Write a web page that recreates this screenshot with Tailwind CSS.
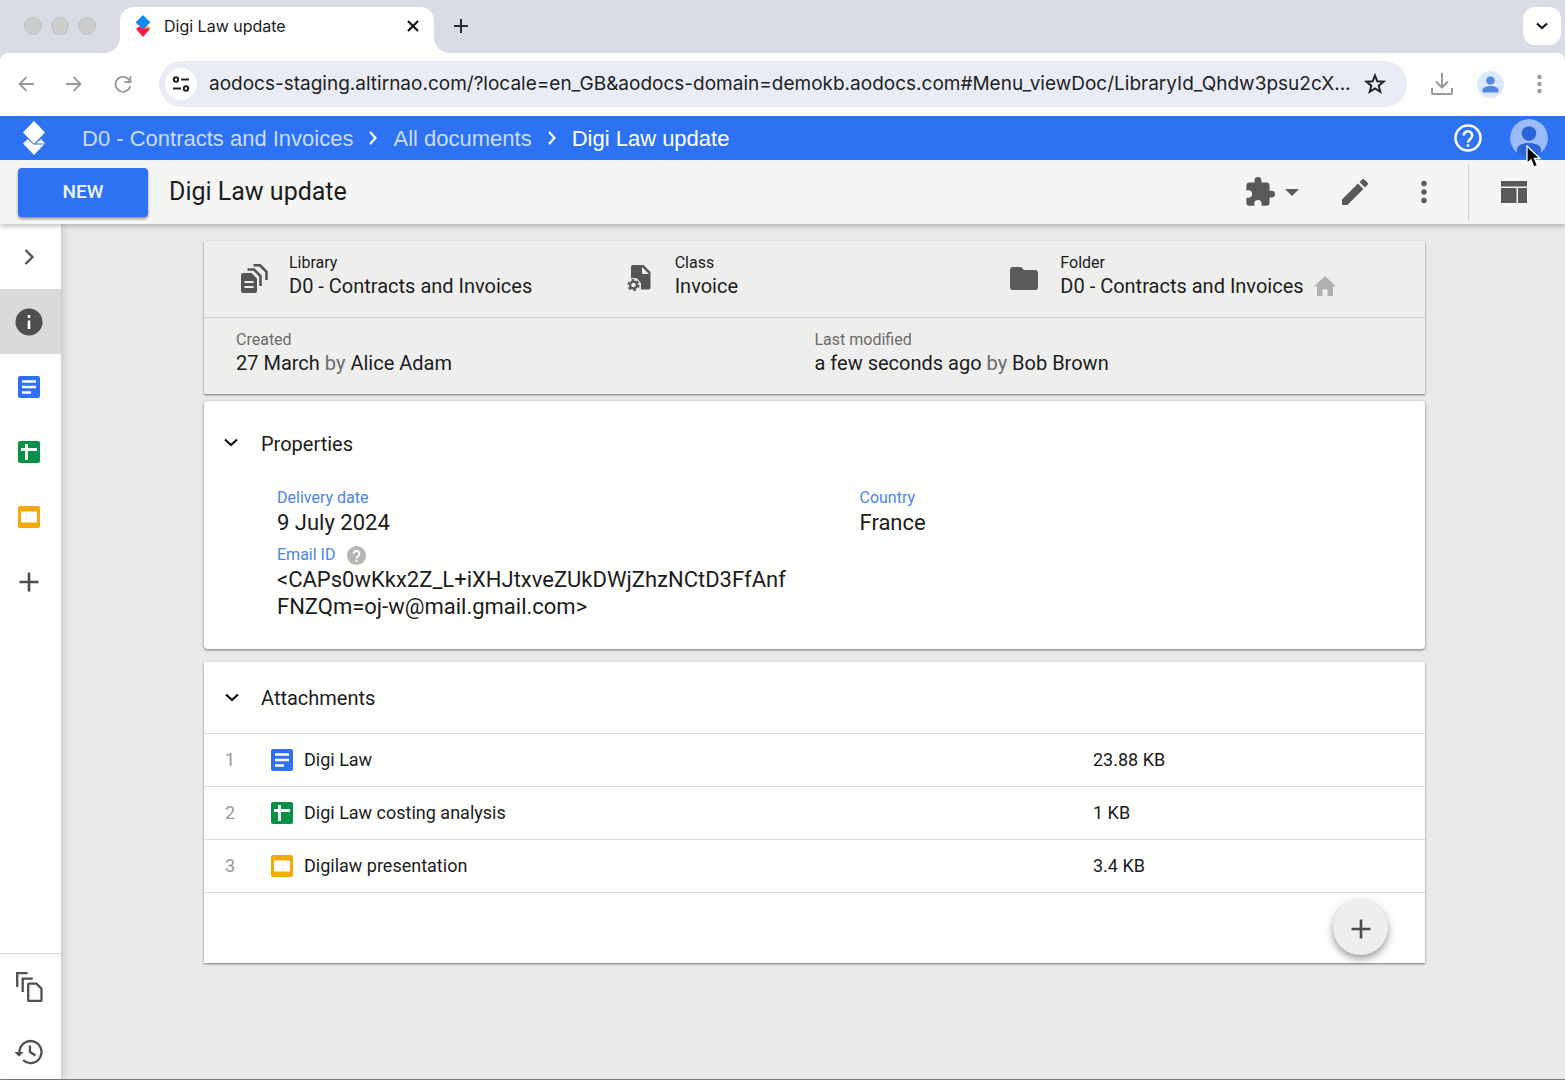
<!DOCTYPE html>
<html lang="en">
<head>
<meta charset="utf-8">
<meta name="viewport" content="width=device-width, initial-scale=1">
<title>Digi Law update</title>
<script src="https://cdn.jsdelivr.net/npm/@tailwindcss/browser@4"></script>
</head>
<body class="flex min-h-screen flex-col bg-[#d9dce4] font-['Roboto',sans-serif] text-[#1c1c1c]">
<svg class="hidden">
  <defs>
    <symbol id="doc" viewBox="0 0 22 22"><rect width="22" height="22" rx="2" fill="#2f6ff0"/><path d="M4 5.500h14M4 11h14M4 16.500h9" stroke="#fff" stroke-width="2.400"/></symbol>
    <symbol id="sheet" viewBox="0 0 22 22"><rect width="22" height="22" rx="2" fill="#089048"/><path d="M3 8.500h16M8.500 3v16" stroke="#fff" stroke-width="2.800"/></symbol>
    <symbol id="slide" viewBox="0 0 22 22"><rect width="22" height="22" rx="2" fill="#f2aa0a"/><rect x="3" y="5.500" width="16" height="11" fill="#fff"/></symbol>
    <symbol id="plus" viewBox="0 0 20 20"><path d="M10 .5v19M.5 10h19" stroke="#4c4c4c" stroke-width="2.600"/></symbol>
    <symbol id="down" viewBox="0 0 14 9"><path d="m1 1.500 6 5.500 6-5.500" fill="none" stroke="#111" stroke-width="2.200"/></symbol>
    <symbol id="dots" viewBox="0 0 6 24"><circle cx="3" cy="3.500" r="2.700"/><circle cx="3" cy="12" r="2.700"/><circle cx="3" cy="20.500" r="2.700"/></symbol>
  </defs>
</svg>

<!-- Browser tab strip -->
<div class="flex h-[53px] items-start pt-[7px]">
  <div class="flex gap-[9px] pt-[10px] pl-6">
    <span class="size-[18px] rounded-full border border-[#bfc1c1] bg-[#cbcecb]"></span>
    <span class="size-[18px] rounded-full border border-[#bfc1c1] bg-[#cbcecb]"></span>
    <span class="size-[18px] rounded-full border border-[#bfc1c1] bg-[#cbcecb]"></span>
  </div>
  <div class="relative ml-6 flex h-[46px] w-[314px] items-start rounded-t-[14px] bg-[#fefefd] px-[15px] pt-[7px]">
    <svg class="absolute bottom-0 -left-4 size-4" viewBox="0 0 16 16"><path d="M16 0v16H0C9 16 16 9 16 0z" fill="#fefefd"/></svg>
    <svg class="absolute -right-4 bottom-0 size-4" viewBox="0 0 16 16"><path d="M0 0v16h16C7 16 0 9 0 0z" fill="#fefefd"/></svg>
    <svg class="mt-px h-[22px] w-4" viewBox="0 0 16 22"><path d="M1 14 8 22l7-8-3-2.500H4z" fill="#fb1d43"/><path d="m9 13.500 4-3 2.500 2.500z" fill="#f8c040"/><path d="m8 0 7.500 7.500L8 14 .5 7.500z" fill="#0b8cf8"/></svg>
    <span class="ml-[13px] flex-1 font-['Inter',sans-serif] text-base leading-6">Digi Law update</span>
    <button aria-label="Close tab" class="mt-[6px]"><svg class="size-3" viewBox="0 0 12 12"><path d="m1 1 10 10M11 1 1 11" stroke="#111" stroke-width="2.200"/></svg></button>
  </div>
  <button aria-label="New tab" class="mt-3 ml-5"><svg class="size-[14px]" viewBox="0 0 14 14"><path d="M7 0v14M0 7h14" stroke="#2c2c2c" stroke-width="2"/></svg></button>
  <button aria-label="Search tabs" class="mr-1 ml-auto flex size-[38px] items-center justify-center rounded-xl bg-[#fefefd]"><svg class="h-2 w-3" viewBox="0 0 12 8"><path d="m1 1.500 5 4.500 5-4.500" fill="none" stroke="#111" stroke-width="2.200"/></svg></button>
</div>

<!-- Address bar -->
<div class="flex h-[63px] items-center rounded-t-lg bg-[#fefefd] pr-[23px] pb-px pl-[18px] text-[#9a9a9a]">
  <button aria-label="Back"><svg class="size-4" viewBox="0 0 16 16" fill="none" stroke="currentColor" stroke-width="1.800"><path d="M16 8H1.500M8.500 1l-7 7 7 7"/></svg></button>
  <button aria-label="Forward" class="ml-8"><svg class="size-4" viewBox="0 0 16 16" fill="none" stroke="currentColor" stroke-width="1.800"><path d="M0 8h14.500M7.500 1l7 7-7 7"/></svg></button>
  <button aria-label="Reload" class="ml-8"><svg class="size-[18px]" viewBox="0 0 18 18" fill="none" stroke="currentColor" stroke-width="1.800"><path d="M15.500 5.500A7.500 7.500 0 1 0 16.300 11M16.500 1v6h-6"/></svg></button>
  <div class="ml-[27px] flex h-[46px] min-w-0 flex-1 items-center rounded-full bg-[#e9ecf5] pr-[21px] pl-[6px]">
    <button aria-label="Site information" class="flex size-8 shrink-0 items-center justify-center rounded-full bg-white"><svg class="h-4 w-[18px]" viewBox="0 0 18 16" fill="none" stroke="#222" stroke-width="2"><circle cx="4" cy="3.500" r="2.200"/><path d="M9 3.500h8M1 12.500h8"/><circle cx="14" cy="12.500" r="2.200"/></svg></button>
    <input aria-label="Address" class="ml-3 min-w-0 flex-1 bg-transparent pt-px font-['Inter',sans-serif] text-[19px] text-[#222] outline-none" value="aodocs-staging.altirnao.com/?locale=en_GB&amp;aodocs-domain=demokb.aodocs.com#Menu_viewDoc/LibraryId_Qhdw3psu2cX...">
    <button aria-label="Bookmark" class="ml-2"><svg class="size-[22px]" viewBox="0 0 22 22" fill="none" stroke="#222" stroke-width="2"><path d="m11 2.500 2.300 5.800 6.200.4-4.800 4 1.600 6.100-5.300-3.400-5.300 3.400 1.600-6.100-4.800-4 6.200-.4z"/></svg></button>
  </div>
  <button aria-label="Downloads" class="ml-6"><svg class="size-[22px]" viewBox="0 0 22 22" fill="none" stroke="currentColor" stroke-width="2"><path d="M11 0v14M5 8.500l6 6 6-6M1 15v4.500q0 1.500 1.500 1.500h17q1.500 0 1.500-1.500V15"/></svg></button>
  <button aria-label="Profile" class="ml-6"><svg class="size-[27px]" viewBox="0 0 27 27"><circle cx="13.500" cy="13.500" r="13.500" fill="#dce8fb"/><circle cx="13.500" cy="9.500" r="4.300" fill="#5588e2"/><path d="M5.500 21.500V19c0-3 5-4 8-4s8 1 8 4v2.500z" fill="#5588e2"/></svg></button>
  <button aria-label="Browser menu" class="ml-[33px]"><svg class="h-5 w-[5px]" viewBox="0 0 6 24" fill="currentColor"><use href="#dots"/></svg></button>
</div>

<!-- Application header -->
<header class="z-20 flex h-[44px] items-center bg-[#2d72f3] pr-[17px] pl-[22px] font-['Liberation_Sans',sans-serif] text-[22px] text-[#c9dcfc]">
  <svg class="h-[34px] w-6" viewBox="0 0 24 34"><path d="M12 0 23 11.500 12 23 1 11.500z" fill="#fff"/><path d="m1 22.500 5-4.500 6 5 7-5 4 4.500L12 34z" fill="#fff"/><path d="m4.500 16.500 6.500 6q1 1 2 .5h9.500M13 23l6.500-6" fill="none" stroke="#2d72f3" stroke-width="1"/></svg>
  <nav aria-label="Breadcrumb" class="ml-9 flex items-center whitespace-nowrap">
    <a href="#">D0 - Contracts and Invoices</a>
    <svg class="mx-4 h-[14px] w-2" viewBox="0 0 8 14"><path d="m1 1 5.500 6L1 13" fill="none" stroke="#fff" stroke-width="2.200"/></svg>
    <a href="#">All documents</a>
    <svg class="mx-4 h-[14px] w-2" viewBox="0 0 8 14"><path d="m1 1 5.500 6L1 13" fill="none" stroke="#fff" stroke-width="2.200"/></svg>
    <a href="#" class="text-white">Digi Law update</a>
  </nav>
  <button aria-label="Help" class="ml-auto"><svg class="size-7" viewBox="0 0 28 28" fill="none" stroke="#fff" stroke-width="2.500"><circle cx="14" cy="14" r="12.500"/><path d="M9.800 11.500a4.200 4.200 0 1 1 6.800 3.200c-1.600 1.200-2.600 2-2.600 3.800"/><path d="M14 20.200v2.600"/></svg></button>
  <button aria-label="Account" class="relative ml-7">
    <svg class="size-[38px]" viewBox="0 0 38 38"><defs><clipPath id="av"><circle cx="19" cy="19" r="19"/></clipPath></defs><g clip-path="url(#av)"><circle cx="19" cy="19" r="19" fill="#9bbcf8"/><circle cx="19" cy="14.500" r="7.300" fill="#2b63d8"/><path d="M7 38v-7c0-5 6-7 12-7s12 2 12 7v7z" fill="#2b63d8"/></g></svg>
    <svg class="absolute top-[26px] left-4 h-[24px] w-[16px]" viewBox="0 0 16 24"><path d="M1 1v17.500l4-3.700 2.800 7.400 3.700-1.500-3-7.200H14z" fill="#000" stroke="#fff" stroke-width="1.300"/></svg>
  </button>
</header>

<!-- Document toolbar -->
<div class="z-10 flex h-16 items-center bg-[#f5f5f4] pr-[38px] pl-[18px] text-[#595959] shadow-[0_2px_5px_rgba(0,0,0,0.25)]">
  <button class="h-[49px] w-[130px] rounded bg-[#2d72f3] pt-px text-[19px] font-medium text-[#eef4ff] shadow-[0_2px_3px_rgba(0,0,0,0.4)]">NEW</button>
  <h1 class="ml-[21px] text-[25px] leading-8 text-[#1c1c1c]">Digi Law update</h1>
  <button aria-label="Add-ons" class="ml-auto flex items-center gap-[10px]"><svg class="size-[30px]" viewBox="1 1 22 22" fill="currentColor"><path d="M20.500 11H19V7c0-1.100-.9-2-2-2h-4V3.500a2.500 2.500 0 0 0-5 0V5H4c-1.100 0-2 .9-2 2v3.800h1.500a2.700 2.700 0 0 1 0 5.400H2V20c0 1.100.9 2 2 2h3.800v-1.500a2.700 2.700 0 0 1 5.400 0V22H17c1.100 0 2-.9 2-2v-4h1.500a2.500 2.500 0 0 0 0-5z"/></svg><svg class="h-[7px] w-[14px]" viewBox="0 0 14 7" fill="currentColor"><path d="M0 0h14L7 7z"/></svg></button>
  <button aria-label="Edit" class="ml-[43px]"><svg class="size-[26px]" viewBox="3 3 18 18" fill="currentColor"><path d="M3 17.250V21h3.750L17.810 9.940l-3.750-3.750L3 17.250zM20.710 7.040a1 1 0 0 0 0-1.410l-2.340-2.340a1 1 0 0 0-1.410 0l-1.830 1.830 3.750 3.750 1.830-1.830z"/></svg></button>
  <button aria-label="More actions" class="ml-[53px]"><svg class="h-6 w-[6px]" viewBox="0 0 6 24" fill="currentColor"><use href="#dots"/></svg></button>
  <div class="ml-[41px] h-[57px] border-l border-[#cfcfcf]"></div>
  <button aria-label="Layout" class="ml-8"><svg class="h-[22px] w-[26px]" viewBox="0 0 26 22" fill="currentColor"><path d="M0 0h26v5.500H0zM0 7h15.500v15H0zM17 7h9v15h-9z"/></svg></button>
</div>

<div class="flex flex-1 border-b border-[#7c7c7c] bg-[#e8e9ea]">
  <!-- Side rail -->
  <aside class="flex w-[62px] shrink-0 flex-col border-r border-[#d0d1d4] bg-[#fefefd] shadow-[2px_0_6px_rgba(0,0,0,0.12)]">
    <button aria-label="Expand" class="flex h-[65px] items-center pl-6"><svg class="h-4 w-[11px]" viewBox="0 0 11 16"><path d="m1.500 1 7 7-7 7" fill="none" stroke="#555" stroke-width="2.400"/></svg></button>
    <button aria-label="Information" class="flex h-[65px] items-center bg-[#dadadc] pl-[15px]"><svg class="size-7" viewBox="0 0 28 28"><circle cx="14" cy="14" r="13.500" fill="#4f4f4f"/><path d="M14 7v3M14 12.500V21" stroke="#fff" stroke-width="2.600"/></svg></button>
    <button aria-label="Document" class="flex h-[65px] items-center pl-[18px]"><svg class="size-[22px]"><use href="#doc"/></svg></button>
    <button aria-label="Spreadsheet" class="flex h-[65px] items-center pl-[18px]"><svg class="size-[22px]"><use href="#sheet"/></svg></button>
    <button aria-label="Presentation" class="flex h-[65px] items-center pl-[18px]"><svg class="size-[22px]"><use href="#slide"/></svg></button>
    <button aria-label="Add" class="flex h-[65px] items-center pl-[19px]"><svg class="size-5"><use href="#plus"/></svg></button>
    <div class="mt-auto flex flex-col border-t border-[#d9d9dd]">
      <button aria-label="Copies" class="flex h-[66px] items-center pl-4"><svg class="h-[30px] w-[27px]" viewBox="0 0 27 30" fill="none" stroke="#4f4f4f" stroke-width="2.300"><path d="M1.200 15V1.200h10.500M6.700 20V6.700h10M12.200 12.700q0-1 1-1h7.300l5 5V28q0 1-1 1h-11.300q-1 0-1-1z"/></svg></button>
      <button aria-label="History" class="flex h-[59px] items-center pt-1 pl-[14px]"><svg class="h-[26px] w-[29px]" viewBox="0 0 29 26" fill="none" stroke="#4f4f4f" stroke-width="2.300"><path d="M5.500 13a11 11 0 1 1 3.600 8.200M16 6.500V13l5.500 3.500"/><path d="M.5 13h9L5 17.800z" fill="#4f4f4f" stroke="none"/></svg></button>
    </div>
  </aside>

  <main class="flex min-w-0 flex-1 flex-col pt-[17px] pr-[140px] pb-10 pl-[142px]">
    <!-- Location and history -->
    <section class="bg-[#eeeeed] shadow-[0_1px_2px_rgba(0,0,0,0.5)]">
      <div class="grid h-[77px] grid-cols-3 border-b border-[#cdced1] px-8 pt-[10px] text-xl leading-[22px]">
        <div class="flex"><svg class="mt-[13px] mr-[21px] ml-[5px] h-[29px] w-[27px]" viewBox="0 0 27 29" fill="none" stroke="#555" stroke-width="2.600"><path d="M2 9h8.500l5.500 5.500V27q0 2-2 2H2q-2 0-2-2V11q0-2 2-2z" fill="#555" stroke="none"/><path d="M3.500 18h9M3.500 23h9" stroke="#eeeeed" stroke-width="2"/><path d="M6.500 5.500h6.500l6.500 6.500V22M12.500 1.300H19l6.500 6.500V16"/></svg>
          <div><div class="text-base leading-6">Library</div><div>D0 - Contracts and Invoices</div></div></div>
        <div class="flex"><svg class="mt-[14px] mr-6 ml-[5px] h-[27px] w-[24px]" viewBox="0 0 24 27"><path d="M6 0h10.500L23.500 7v15.500q0 2-2 2H14v-6l-4-5H4V2q0-2 2-2z" fill="#555"/><path d="M15 2v7h7z" fill="#eeeeed"/><circle cx="6.500" cy="20" r="7" fill="#eeeeed"/><circle cx="6.500" cy="20" r="3.400" fill="none" stroke="#555" stroke-width="2.200"/><circle cx="6.500" cy="20" r="5.200" fill="none" stroke="#555" stroke-width="1.800" stroke-dasharray="2.700 2.745"/></svg>
          <div><div class="text-base leading-6">Class</div><div>Invoice</div></div></div>
        <div class="flex"><svg class="mt-4 mr-[22px] ml-[3px] h-[23px] w-[28px]" viewBox="2 4 20 16" preserveAspectRatio="none"><path d="M10 4H4c-1.100 0-2 .9-2 2v12c0 1.100.9 2 2 2h16c1.100 0 2-.9 2-2V8c0-1.100-.9-2-2-2h-8z" fill="#5a5a5a"/></svg>
          <div><div class="text-base leading-6">Folder</div><div class="flex items-center whitespace-nowrap">D0 - Contracts and Invoices<svg class="ml-[10px] h-5 w-[22px]" viewBox="0 0 22 20"><path d="M11 0 0 10.500h3V20h5.500v-6.500h5V20H19v-9.500h3z" fill="#b0b0b0"/></svg></div></div></div>
      </div>
      <div class="grid h-[76px] grid-cols-2 px-8 pt-[10px] text-xl leading-[22px]">
        <div><div class="text-base leading-6 text-[#6b6b6b]">Created</div><div>27 March <span class="text-[#6b6b6b]">by</span> Alice Adam</div></div>
        <div><div class="text-base leading-6 text-[#6b6b6b]">Last modified</div><div>a few seconds ago <span class="text-[#6b6b6b]">by</span> Bob Brown</div></div>
      </div>
    </section>

    <!-- Properties -->
    <section class="mt-[7px] rounded bg-[#fefefd] pt-[27px] pb-[29px] shadow-[0_1px_3px_rgba(0,0,0,0.5)]">
      <h2 class="flex items-center pl-5 text-xl leading-8"><button aria-label="Collapse properties" class="mr-[23px] pb-1"><svg class="h-[9px] w-[14px]"><use href="#down"/></svg></button>Properties</h2>
      <dl class="mt-[27px] grid grid-cols-2 gap-x-[74px] gap-y-2 pr-[57px] pl-[73px] text-[22px] leading-[27px]">
        <div><dt class="text-base leading-[22px] text-[#4d85e6]">Delivery date</dt><dd>9 July 2024</dd></div>
        <div><dt class="text-base leading-[22px] text-[#4d85e6]">Country</dt><dd>France</dd></div>
        <div><dt class="flex items-center gap-3 text-base leading-[22px] text-[#4d85e6]">Email ID<svg class="size-[19px]" viewBox="0 0 28 28" fill="none" stroke="#fff" stroke-width="3"><circle cx="14" cy="14" r="14" fill="#b5b5b5" stroke="none"/><path d="M9.800 11.500a4.200 4.200 0 1 1 6.800 3.200c-1.600 1.200-2.600 2-2.600 3.800"/><path d="M14 20.200v3"/></svg></dt><dd class="whitespace-nowrap">&lt;CAPs0wKkx2Z_L+iXHJtxveZUkDWjZhzNCtD3FfAnf<br>FNZQm=oj-w@mail.gmail.com&gt;</dd></div>
      </dl>
    </section>

    <!-- Attachments -->
    <section class="relative mt-[13px] bg-[#fefefd] pb-[70px] shadow-[0_1px_2px_rgba(0,0,0,0.5)]">
      <h2 class="flex h-[72px] items-center border-b border-[#dcdde0] pl-[21px] text-xl"><button aria-label="Collapse attachments" class="mr-[22px]"><svg class="h-[9px] w-[14px]"><use href="#down"/></svg></button>Attachments</h2>
      <table class="w-full table-fixed border-separate border-spacing-0 text-left text-lg [&_td]:border-b [&_td]:border-[#dcdde0]">
        <colgroup><col class="w-[67px]"><col><col class="w-[332px]"></colgroup>
        <tbody>
          <tr class="h-[53px]"><td class="pl-[21px] text-[#9a9a9a]">1</td><td><a href="#" class="flex items-center gap-[11px]"><svg class="size-[22px]"><use href="#doc"/></svg>Digi Law</a></td><td>23.88 KB</td></tr>
          <tr class="h-[53px]"><td class="pl-[21px] text-[#9a9a9a]">2</td><td><a href="#" class="flex items-center gap-[11px]"><svg class="size-[22px]"><use href="#sheet"/></svg>Digi Law costing analysis</a></td><td>1 KB</td></tr>
          <tr class="h-[53px]"><td class="pl-[21px] text-[#9a9a9a]">3</td><td><a href="#" class="flex items-center gap-[11px]"><svg class="size-[22px]"><use href="#slide"/></svg>Digilaw presentation</a></td><td>3.4 KB</td></tr>
        </tbody>
      </table>
      <button aria-label="Add attachment" class="absolute right-[37px] bottom-2 flex size-[55px] items-center justify-center rounded-full bg-[#eeeeed] pt-[3px] shadow-[0_4px_7px_rgba(0,0,0,0.35),0_0_14px_rgba(60,60,140,0.08)]"><svg class="size-5"><use href="#plus"/></svg></button>
    </section>
  </main>
</div>
</body>
</html>
